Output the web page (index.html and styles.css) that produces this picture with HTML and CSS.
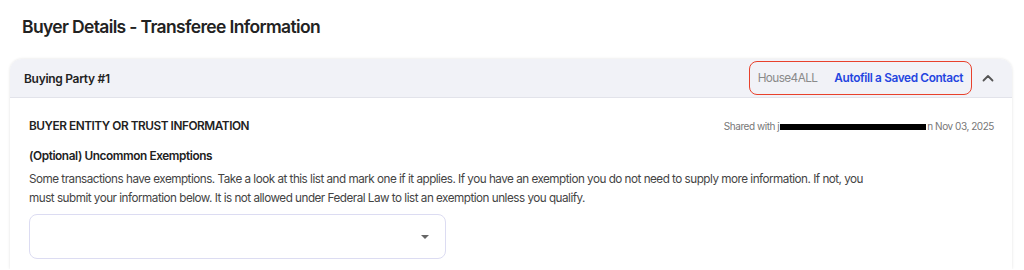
FILE: index.html
```html
<!DOCTYPE html>
<html>
<head>
<meta charset="utf-8">
<link rel="stylesheet" href="styles.css">
</head>
<body>
<div class="page">
  <h1 class="title">Buyer Details - Transferee Information</h1>
  <div class="card">
    <div class="card-header">
      <div class="party">Buying Party #1</div>
      <div class="header-right">
        <div class="autofill-box">
          <span class="house">House4ALL</span>
          <span class="autofill">Autofill a Saved Contact</span>
        </div>
        <svg class="chevron" width="12" height="8" viewBox="0 0 12 8"><path d="M1.5 6.5 L6 2 L10.5 6.5" fill="none" stroke="#555" stroke-width="1.8" stroke-linecap="round" stroke-linejoin="round"/></svg>
      </div>
    </div>
    <div class="card-body">
      <div class="section-row">
        <div class="section-title">BUYER ENTITY OR TRUST INFORMATION</div>
        <div class="shared">Shared with j<span class="redacted"></span>n Nov 03, 2025</div>
      </div>
      <div class="sub-title">(Optional) Uncommon Exemptions</div>
      <p class="desc">Some transactions have exemptions. Take a look at this list and mark one if it applies. If you have an exemption you do not need to supply more information. If not, you must submit your information below. It is not allowed under Federal Law to list an exemption unless you qualify.</p>
      <div class="select">
        <svg class="caret" width="10" height="6" viewBox="0 0 10 6"><path d="M1 1 L9 1 L5 5 Z" fill="#666"/></svg>
      </div>
    </div>
  </div>
</div>
</body>
</html>
```
FILE: styles.css
```css
* { box-sizing: border-box; }
html, body { margin: 0; padding: 0; background: #fff; }
body { font-family: Inter, "Noto Sans", sans-serif; color: #222; }
.page { padding: 16px 12px 0 10px; }
.title {
  margin: 0 0 21px 12px;
  font-size: 17.5px;
  font-weight: 600;
  line-height: 22px;
  color: #222;
  letter-spacing: -0.65px;
}
.card {
  border-radius: 12px 12px 0 0;
  background: #fff;
  box-shadow: 0 0 3px rgba(0,0,0,0.12);
}
.card-header {
  height: 39px;
  background: #f1f2f7;
  border-radius: 12px 12px 0 0;
  border-bottom: 1px solid #e2e3ea;
  display: flex;
  align-items: center;
  justify-content: space-between;
  padding: 0 18px 0 14px;
}
.party { font-size: 12px; font-weight: 600; color: #222; letter-spacing: -0.3px; }
.header-right { display: flex; align-items: center; gap: 10px; }
.autofill-box {
  border: 1.5px solid #e8412c;
  border-radius: 8px;
  height: 34px;
  display: flex;
  align-items: center;
  gap: 17px;
  padding: 0 8px 0 8px;
  font-size: 11.8px;
  letter-spacing: -0.35px;
}
.house { color: #8a8a8a; letter-spacing: -0.6px; }
.autofill { color: #2445e0; font-weight: 600; }
.chevron { display: block; }
.card-body { padding: 21px 18px 10px 19px; }
.section-row { display: flex; justify-content: space-between; align-items: center; }
.section-title { font-size: 11.8px; font-weight: 600; color: #222; letter-spacing: -0.45px; }
.shared { font-size: 10px; color: #777; letter-spacing: -0.45px; }
.redacted {
  background: #000;
  display: inline-block;
  height: 6px;
  vertical-align: middle;
  width: 146px;
  margin: 0 1px;
}
.sub-title { margin-top: 16px; font-size: 11.8px; font-weight: 600; color: #222; letter-spacing: -0.4px; }
.desc {
  margin: 7px 0 0;
  font-size: 11.7px;
  line-height: 19px;
  color: #444;
  letter-spacing: -0.5px;
  max-width: 860px;
}
.select {
  margin-top: 6px;
  width: 417px;
  height: 45px;
  border: 1px solid #dcdcf2;
  border-radius: 8px;
  display: flex;
  align-items: center;
  justify-content: flex-end;
  padding-right: 15px;
}
.caret { display: block; }
```
